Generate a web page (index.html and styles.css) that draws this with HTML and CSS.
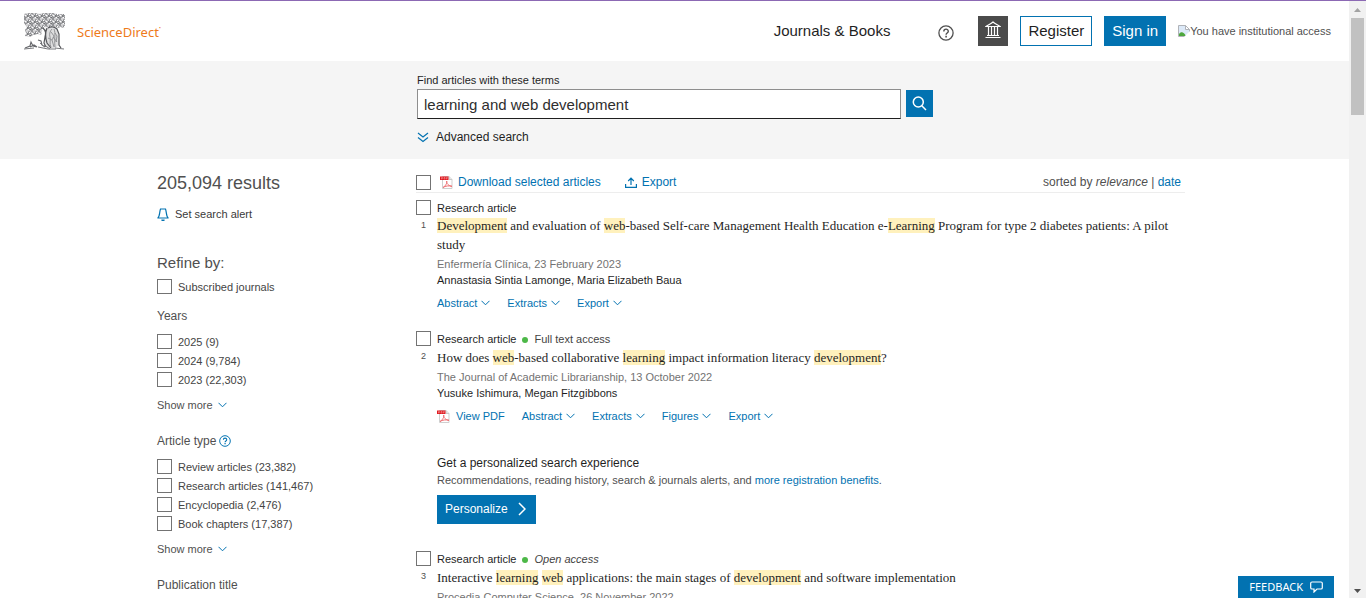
FILE: index.html
```html
<!DOCTYPE html>
<html lang="en">
<head>
<meta charset="utf-8">
<title>Search results | ScienceDirect</title>
<link rel="stylesheet" href="styles.css">
</head>
<body>
<svg class="defs" aria-hidden="true">
  <defs>
    <pattern id="leaves" width="7" height="6" patternUnits="userSpaceOnUse">
      <path d="M0 0h7v6H0z" fill="#d4d4d6"/>
      <path d="M0 1c2-2 3 1 1 2s0 2 2 1 1-3 2-3 2 2 0 2 0 2 2 2M5 0c-1 1 2 2 2 3M0 5l2 1M3 2l1 1M6 5l1-1" fill="none" stroke="#66676b" stroke-width=".8"/>
      <path d="M1 2h1v1H1zM4 4h1v1H4zM5 1h1v1H5z" fill="#fff"/>
    </pattern>
    <symbol id="chevron" viewBox="0 0 9 6"><path d="M.5 .8 4.5 4.8 8.5 .8" fill="none" stroke="currentColor" stroke-width="1"/></symbol>
    <symbol id="help" viewBox="0 0 16 16"><circle cx="8" cy="8" r="7.1" fill="none" stroke="currentColor" stroke-width="1.3"/><path d="M5.8 6.4c0-3 4.5-2.9 4.5-.2 0 1.8-2.2 1.8-2.2 3.5" fill="none" stroke="currentColor" stroke-width="1.4"/><path d="M7.3 10.8h1.6v1.6H7.3z" fill="currentColor"/></symbol>
    <symbol id="pdf" viewBox="0 0 13 13"><path d="M2.5 .5h6.500l3 3v9h-9.500z" fill="#fff" stroke="#cfcfcf"/><path d="M9 .5v3h3" fill="#e8e8e8" stroke="#c9c9c9"/><path d="M0 .5h8.500v3.500H0z" fill="#e01b22"/><path d="M1.500 3.300V1.500h1v1h-1M4 1.500V3h1V1.500zM6.500 3.300V1.500h1.200M6.500 2.500h1" stroke="#f6a5a5" stroke-width=".5" fill="none"/><path d="M3 11.500c2-1 4.500-4.500 3.700-6.500-.8 2 2 5 5.300 5.300-3-.8-6.500-.5-9 1.200" fill="none" stroke="#ee6c70" stroke-width="1"/></symbol>
  </defs>
</svg>
<div class="page">
  <header class="header">
    <a class="brand" href="#" aria-label="ScienceDirect home">
      <svg class="tree" viewBox="0 0 41 37" aria-hidden="true">
        <path d="M0 1l4-1h8l3 1 5-1h9l4 1h8v13l-5 1-5-1-4 1-7-1-2 4-1 4-3-1-5 1-3 2-5-1 1-3-1-3 2-3-3-4z" fill="url(#leaves)"/>
        <path d="M21 16l4-2h6l3 3 1 15-4 3h-8l-2-6z" fill="#dededf"/>
        <path d="M19 15c3 3 3 5 2 9l-1 6 2 4M23 15c-2 5-2 9 0 15l4 5M24 15c3-2 7-1 9 1l2 5v11l2 3" fill="none" stroke="#55565a" stroke-width="1.200"/>
        <path d="M28 16c-2 2-3 5-2 8s-1 7 1 10M30 16c2 5 0 8 1 18M27 19l3 4-2 4 2 7M24 25l4 2M31 20l2 3-1 6M29 24l4 5" fill="none" stroke="#8a8b8f" stroke-width=".9"/>
        <path d="M1 35l5-2 1-4 2 4 4 1M14 27l3 1 1 4 3 2M6 34l4-2 3 2" fill="none" stroke="#66676b" stroke-width="1.100"/>
        <path d="M0 36l10-1M14 34l10 2M20 32l6 4M31 35l9 1M24 36h8M16 30l3 3" fill="none" stroke="#77787c" stroke-width="1"/>
      </svg>
      <span class="wordmark">ScienceDirect<sup>•</sup></span>
    </a>
    <nav class="nav">
      <a class="journals" href="#">Journals &amp; Books</a>
      <a class="help" href="#" aria-label="Help"><svg width="16" height="16"><use href="#help"/></svg></a>
      <button class="institution" type="button" aria-label="Institution">
        <svg viewBox="0 0 16 18" width="16" height="18" fill="none" stroke="currentColor"><path d="M1 5.500C3 4 6 3 8 1c2 2 5 3 7 4.500zM.5 16.500h15M2 14.500h12M3.500 6v8M6.500 6v8M9.500 6v8M12.500 6v8" stroke-width="1.200"/></svg>
      </button>
      <a class="btn btn-outline" href="#">Register</a>
      <a class="btn btn-solid" href="#">Sign in</a>
      <span class="access">
        <svg viewBox="0 0 12 12" width="12" height="12" aria-hidden="true"><path d="M.5 .5h7l4 4v7H.5z" fill="#dce9f8" stroke="#b0b3b8"/><path d="M7.500 .5v4h4z" fill="#fff" stroke="#b0b3b8"/><path d="M1 11V9c2-3 5-2 7 2z" fill="#4ea73d"/><path d="M6 12l6-6v6z" fill="#fff"/></svg><span>You have institutional access</span>
      </span>
    </nav>
  </header>

  <section class="search-band">
    <form class="search">
      <label class="search-label" for="terms">Find articles with these terms</label>
      <div class="search-row">
        <input id="terms" class="search-input" type="text" value="learning and web development">
        <button class="search-button" type="button" aria-label="Search"><svg viewBox="0 0 15 15" width="15" height="15" fill="none" stroke="currentColor" stroke-width="1.500"><circle cx="6.300" cy="6" r="5"/><path d="m9.800 9.700 4.200 4.300"/></svg></button>
      </div>
      <a class="advanced" href="#"><svg viewBox="0 0 12 11" width="12" height="11" fill="none" stroke="#0272b1" stroke-width="1.200"><path d="m1 1 5 4 5-4M1 5.500l5 4 5-4"/></svg>Advanced search</a>
    </form>
  </section>

  <div class="content">
    <aside class="sidebar">
      <h1 class="count">205,094 results</h1>
      <a class="alert" href="#"><svg viewBox="0 0 12 13" width="12" height="13" fill="none" stroke="#0272b1" stroke-width="1.200"><path d="M.4 10h11.200M.8 10C3 8.500 2.300 4 3.500 1h5c1.200 3 .5 7.500 2.700 9M4.500 11.800c1 .9 2 .9 3 0"/></svg>Set search alert</a>
      <h2 class="refine">Refine by:</h2>
      <label class="check subscribed"><input type="checkbox">Subscribed journals</label>
      <h3 class="facet">Years</h3>
      <div class="options">
        <label class="check"><input type="checkbox">2025 (9)</label>
        <label class="check"><input type="checkbox">2024 (9,784)</label>
        <label class="check"><input type="checkbox">2023 (22,303)</label>
      </div>
      <button class="more" type="button">Show more<svg class="chev"><use href="#chevron"/></svg></button>
      <h3 class="facet facet-next">Article type<svg class="facet-help" width="12" height="12"><use href="#help"/></svg></h3>
      <div class="options">
        <label class="check"><input type="checkbox">Review articles (23,382)</label>
        <label class="check"><input type="checkbox">Research articles (141,467)</label>
        <label class="check"><input type="checkbox">Encyclopedia (2,476)</label>
        <label class="check"><input type="checkbox">Book chapters (17,387)</label>
      </div>
      <button class="more" type="button">Show more<svg class="chev"><use href="#chevron"/></svg></button>
      <h3 class="facet facet-next">Publication title</h3>
    </aside>

    <main class="main">
      <div class="toolbar">
        <input type="checkbox" aria-label="Select all articles">
        <a class="tool" href="#"><svg width="13" height="13"><use href="#pdf"/></svg>Download selected articles</a>
        <a class="tool export" href="#"><svg viewBox="0 0 12 12" width="12" height="12" fill="none" stroke="currentColor" stroke-width="1.200"><path d="M.6 8v3.400h10.800V8M6 9V2.500M3.200 5 6 2.200 8.800 5"/></svg>Export</a>
        <p class="sort">sorted by <em>relevance</em> | <a href="#">date</a></p>
      </div>

      <article class="result">
        <div class="pick"><input type="checkbox" aria-label="Select result 1"><span class="num">1</span></div>
        <div class="body">
          <p class="kind">Research article</p>
          <h2 class="title"><a href="#"><mark>Development</mark> and evaluation of <mark>web</mark>-based Self-care Management Health Education e-<mark>Learning</mark> Program for type 2 diabetes patients: A pilot study</a></h2>
          <p class="source">Enfermería Clínica, 23 February 2023</p>
          <p class="authors">Annastasia Sintia Lamonge, Maria Elizabeth Baua</p>
          <div class="links">
            <button type="button">Abstract<svg class="chev"><use href="#chevron"/></svg></button>
            <button type="button">Extracts<svg class="chev"><use href="#chevron"/></svg></button>
            <button type="button">Export<svg class="chev"><use href="#chevron"/></svg></button>
          </div>
        </div>
      </article>

      <article class="result result-next">
        <div class="pick"><input type="checkbox" aria-label="Select result 2"><span class="num">2</span></div>
        <div class="body">
          <p class="kind">Research article<span class="dot"></span><span class="state">Full text access</span></p>
          <h2 class="title"><a href="#">How does <mark>web</mark>-based collaborative <mark>learning</mark> impact information literacy <mark>development</mark>?</a></h2>
          <p class="source">The Journal of Academic Librarianship, 13 October 2022</p>
          <p class="authors">Yusuke Ishimura, Megan Fitzgibbons</p>
          <div class="links">
            <a class="view" href="#"><svg width="13" height="13"><use href="#pdf"/></svg>View PDF</a>
            <button type="button">Abstract<svg class="chev"><use href="#chevron"/></svg></button>
            <button type="button">Extracts<svg class="chev"><use href="#chevron"/></svg></button>
            <button type="button">Figures<svg class="chev"><use href="#chevron"/></svg></button>
            <button type="button">Export<svg class="chev"><use href="#chevron"/></svg></button>
          </div>
        </div>
      </article>

      <section class="promo">
        <h2>Get a personalized search experience</h2>
        <p>Recommendations, reading history, search &amp; journals alerts, and <a href="#">more registration benefits</a>.</p>
        <button class="personalize" type="button">Personalize<svg viewBox="0 0 8 14" width="8" height="14" fill="none" stroke="currentColor" stroke-width="1.500"><path d="m1 1 6 6-6 6"/></svg></button>
      </section>

      <article class="result">
        <div class="pick"><input type="checkbox" aria-label="Select result 3"><span class="num">3</span></div>
        <div class="body">
          <p class="kind">Research article<span class="dot"></span><em class="state">Open access</em></p>
          <h2 class="title"><a href="#">Interactive <mark>learning</mark> <mark>web</mark> applications: the main stages of <mark>development</mark> and software implementation</a></h2>
          <p class="source">Procedia Computer Science, 26 November 2022</p>
        </div>
      </article>
    </main>
  </div>
</div>

<div class="scrollbar" aria-hidden="true">
  <svg viewBox="0 0 7 4" width="7" height="4"><path d="M0 4 3.500 0 7 4z" fill="#a3a3a3"/></svg>
  <div class="thumb"></div>
  <svg class="down" viewBox="0 0 7 4" width="7" height="4"><path d="M0 0 3.500 4 7 0z" fill="#505050"/></svg>
</div>
<button class="feedback" type="button">FEEDBACK<svg viewBox="0 0 13 12" width="13" height="12" fill="none" stroke="currentColor" stroke-width="1.200"><path d="M2 1h9q1.300 0 1.300 1.300v4.400Q12.300 8 11 8H7l-3 3V8H2Q.7 8 .7 6.700V2.300Q.7 1 2 1z"/></svg></button>
</body>
</html>
```
FILE: styles.css
```css
* { box-sizing: border-box; }
body {
  margin: 0;
  height: 100vh;
  overflow: hidden;
  display: flex;
  border-top: 1px solid #8c69b4;
  background: #fff;
  color: #505050;
  font: 11px/16px "Liberation Sans", Arial, sans-serif;
}
h1, h2, h3, p { margin: 0; font-weight: normal; }
a { color: #0272b1; text-decoration: none; }
button { font: inherit; border: 0; padding: 0; background: none; color: inherit; cursor: pointer; }
svg { flex: none; }
.defs { position: absolute; width: 0; height: 0; }
input[type="checkbox"] {
  appearance: none;
  flex: none;
  width: 15px;
  height: 15px;
  margin: 0;
  border: 1px solid #737373;
  background: #fff;
}
.page { flex: 1; min-width: 0; overflow: hidden; }

.header {
  display: flex;
  align-items: center;
  justify-content: space-between;
  height: 60px;
  padding: 0 18px 0 24px;
}
.brand { display: flex; align-items: center; gap: 12px; color: #ee7a1a; }
.tree { width: 41px; height: 37px; }
.wordmark { padding-top: 2px; font: 13px/20px "Noto Sans", "Open Sans", sans-serif; }
.wordmark sup { font-size: 5px; line-height: 5px; vertical-align: 7px; }
.nav { display: flex; align-items: center; gap: 12px; }
.journals { margin-right: 36px; color: #1f1f1f; font-size: 15px; }
.help { display: flex; margin-right: 12px; padding-top: 4px; color: #505050; }
.institution {
  display: flex;
  align-items: center;
  justify-content: center;
  width: 30px;
  height: 30px;
  padding-bottom: 3px;
  background: #4b4b4b;
  color: #fff;
}
.btn { height: 30px; padding: 0 7px; border: 1px solid #0272b1; font-size: 15px; line-height: 28px; }
.btn-outline { color: #1f1f1f; }
.btn-solid { background: #0272b1; color: #fff; }
.access { display: flex; align-items: center; white-space: nowrap; }

.search-band { padding: 11px 0 14px; background: #f5f5f5; }
.search, .content { max-width: 1035px; margin: 0 auto; }
.search { padding-left: 260px; color: #1f1f1f; }
.search-label { display: block; }
.search-row { display: flex; align-items: center; gap: 5px; margin-top: 1px; }
.search-input {
  width: 484px;
  height: 30px;
  padding: 0 6px;
  border: 1px solid #8e8e8e;
  border-bottom-color: #1f1f1f;
  background: #fff;
  color: #2e2e2e;
  font: 15px "Liberation Sans", Arial, sans-serif;
}
.search-button {
  display: flex;
  align-items: center;
  justify-content: center;
  width: 27px;
  height: 27px;
  margin-bottom: 2px;
  background: #0272b1;
  color: #fff;
}
.advanced { display: flex; align-items: center; gap: 7px; margin-top: 10px; color: #1f1f1f; font-size: 12px; }

.content { display: grid; grid-template-columns: 259px minmax(0, 1fr); padding-right: 7px; }
.sidebar { padding-top: 12px; }
.count { font-size: 18px; line-height: 24px; }
.alert { display: flex; align-items: center; gap: 6px; margin-top: 11px; color: #3a3a3a; }
.refine { margin-top: 31px; font-size: 15px; line-height: 20px; }
.check { display: flex; align-items: center; gap: 6px; height: 19px; color: #444; }
.subscribed { margin-top: 4px; }
.facet { display: flex; align-items: center; gap: 3px; margin-top: 10px; font-size: 12px; line-height: 20px; }
.facet-next { margin-top: 18px; }
.facet-help { color: #0272b1; }
.options { margin-top: 6px; }
.more { display: flex; align-items: center; gap: 5px; margin-top: 8px; }
.chev { width: 9px; height: 6px; color: #0272b1; }

.main { padding-top: 13px; }
.toolbar { display: flex; align-items: center; height: 21px; border-bottom: 1px solid #ededed; font-size: 12px; }
.toolbar input { margin-top: 1px; }
.tool { display: flex; align-items: center; gap: 5px; margin-left: 9px; }
.export { margin-left: 24px; }
.sort { margin-left: auto; padding-right: 4px; }
.result { display: flex; gap: 6px; margin-top: 7px; }
.result-next { margin-top: 20px; }
.pick { display: flex; flex-direction: column; align-items: center; width: 15px; }
.num { margin-top: 2px; font-size: 9px; }
.body { flex: 1; min-width: 0; }
.kind { display: flex; align-items: center; color: #1f1f1f; }
.dot { width: 6px; height: 6px; margin: 1px 6px 0; border-radius: 50%; background: #4db848; }
.state { color: #444; }
.title { font: 13px/19px "Liberation Serif", "Times New Roman", serif; }
.result-next .title, .promo + .result .title { margin-top: 1px; }
.title a { color: #1f1f1f; }
mark { background: #fff1bd; color: inherit; }
.source { margin-top: 2px; color: #737373; }
.authors { color: #1f1f1f; }
.links { display: flex; align-items: center; gap: 17px; margin-top: 7px; color: #0272b1; }
.links button, .view { display: flex; align-items: center; gap: 4px; }
.view { gap: 6px; }
.promo { padding: 31px 0 20px 21px; }
.promo h2 { color: #1f1f1f; font-size: 12px; line-height: 16px; }
.promo p { margin-top: 1px; }
.personalize {
  display: flex;
  align-items: center;
  gap: 10px;
  height: 29px;
  margin-top: 7px;
  padding: 0 10px 2px 8px;
  background: #0272b1;
  color: #fff;
  font-size: 12px;
}

.scrollbar {
  display: flex;
  flex-direction: column;
  align-items: center;
  width: 17px;
  padding: 7px 0 5px;
  background: #f1f1f1;
}
.thumb { width: 13px; height: 97px; margin-top: 6px; background: #c1c1c1; }
.down { margin-top: auto; }
.feedback {
  position: absolute;
  right: 32px;
  bottom: 0;
  display: flex;
  align-items: center;
  gap: 7px;
  height: 22px;
  padding: 0 11px;
  background: #0272b1;
  color: #fff;
  font: 11px/16px "Noto Sans", "Open Sans", sans-serif;
}
```
